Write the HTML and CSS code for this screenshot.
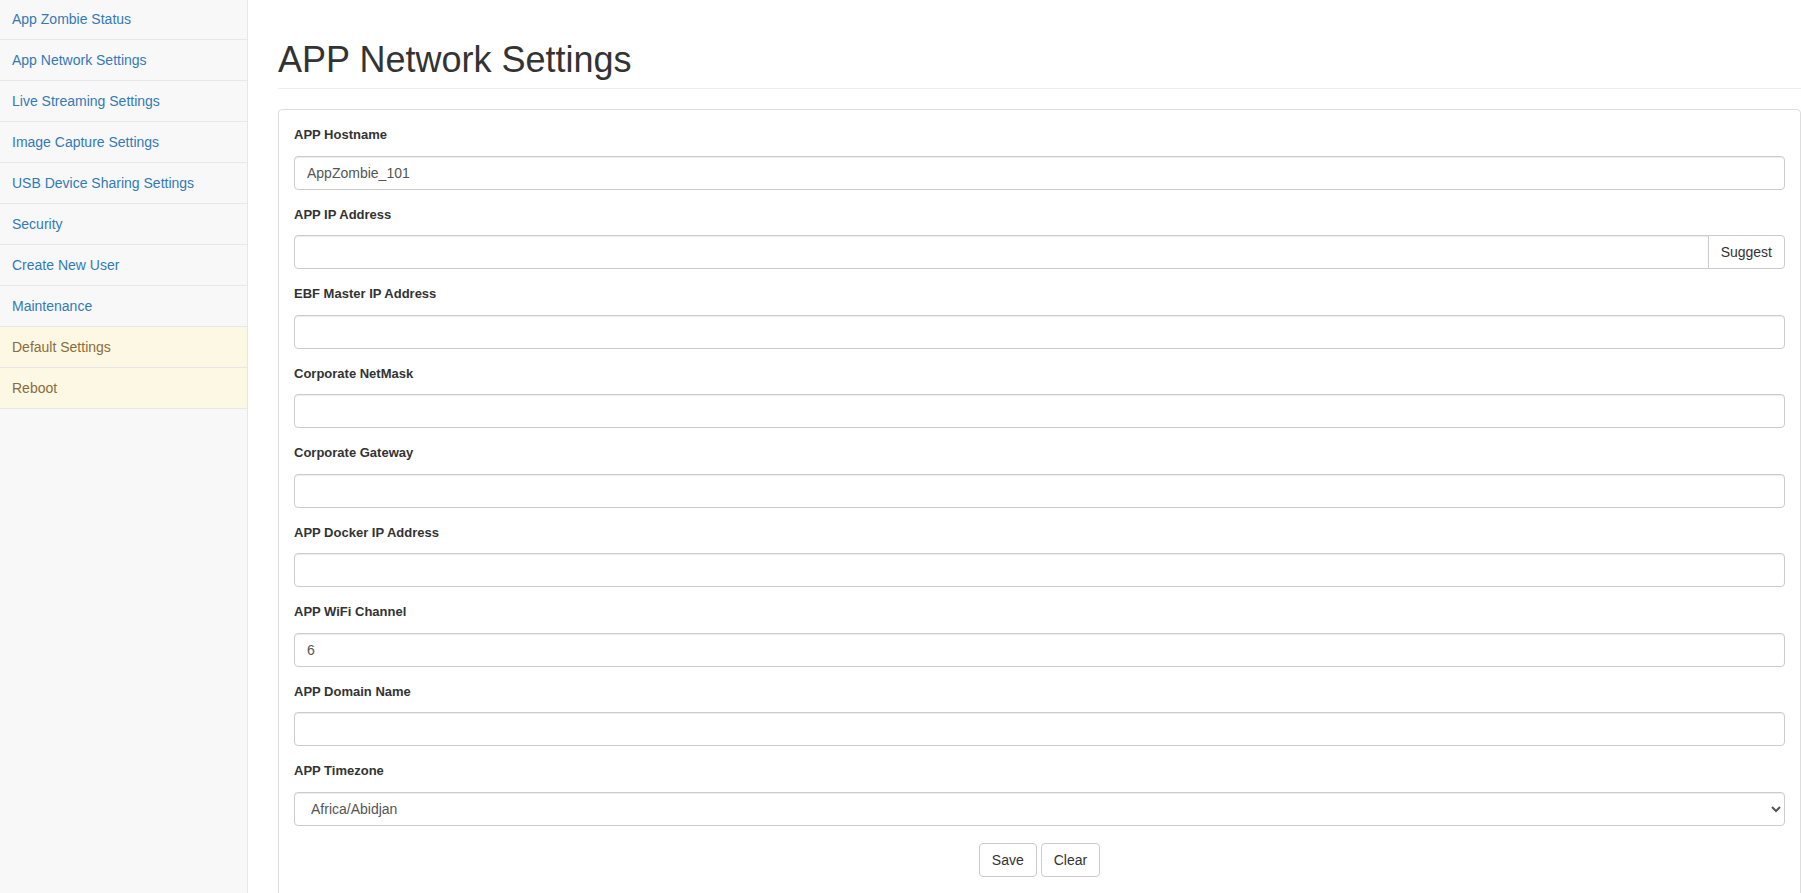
FILE: index.html
```html
<!DOCTYPE html>
<html lang="en">
<head>
<meta charset="utf-8">
<title>APP Network Settings</title>
<link rel="stylesheet" href="styles.css">
</head>
<body>
<div class="layout">
  <nav class="sidebar">
    <div class="list">
      <a class="item" href="#">App Zombie Status</a>
      <a class="item" href="#">App Network Settings</a>
      <a class="item" href="#">Live Streaming Settings</a>
      <a class="item" href="#">Image Capture Settings</a>
      <a class="item" href="#">USB Device Sharing Settings</a>
      <a class="item" href="#">Security</a>
      <a class="item" href="#">Create New User</a>
      <a class="item" href="#">Maintenance</a>
      <a class="item item-warning" href="#">Default Settings</a>
      <a class="item item-warning" href="#">Reboot</a>
    </div>
  </nav>
  <main class="main">
    <h1 class="page-title">APP Network Settings</h1>
    <div class="panel">
      <form class="panel-body">
        <div class="form-group">
          <label class="label">APP Hostname</label>
          <input class="control" type="text" value="AppZombie_101">
        </div>
        <div class="form-group">
          <label class="label">APP IP Address</label>
          <div class="input-group">
            <input class="control control-grouped" type="text">
            <button class="btn btn-addon" type="button">Suggest</button>
          </div>
        </div>
        <div class="form-group">
          <label class="label">EBF Master IP Address</label>
          <input class="control" type="text">
        </div>
        <div class="form-group">
          <label class="label">Corporate NetMask</label>
          <input class="control" type="text">
        </div>
        <div class="form-group">
          <label class="label">Corporate Gateway</label>
          <input class="control" type="text">
        </div>
        <div class="form-group">
          <label class="label">APP Docker IP Address</label>
          <input class="control" type="text">
        </div>
        <div class="form-group">
          <label class="label">APP WiFi Channel</label>
          <input class="control" type="text" value="6">
        </div>
        <div class="form-group">
          <label class="label">APP Domain Name</label>
          <input class="control" type="text">
        </div>
        <div class="form-group">
          <label class="label">APP Timezone</label>
          <select class="control select">
            <option>Africa/Abidjan</option>
            <option>Africa/Accra</option>
            <option>Africa/Addis_Ababa</option>
          </select>
        </div>
        <div class="actions">
          <button class="btn" type="button">Save</button>
          <button class="btn" type="button">Clear</button>
        </div>
      </form>
    </div>
  </main>
</div>
</body>
</html>
```

FILE: styles.css
```css
html, body {
  height: 100%;
}
body {
  margin: 0;
  overflow: hidden;
  font-family: "Liberation Sans", Arial, Helvetica, sans-serif;
  font-size: 14px;
  line-height: 20px;
  color: #333;
  background: #fff;
}
* {
  box-sizing: border-box;
}
.layout {
  display: flex;
  height: 100%;
}
.sidebar {
  width: 248px;
  flex: none;
  background: #f8f8f8;
  border-right: 1px solid #e7e7e7;
  height: 100%;
}
.list {
  display: flex;
  flex-direction: column;
  margin-top: -2px;
}
.item {
  display: block;
  padding: 10px 12px;
  border-top: 1px solid #e7e7e7;
  border-bottom: 1px solid #e7e7e7;
  margin-bottom: -1px;
  color: #337ab7;
  text-decoration: none;
  line-height: 20px;
}
.item-warning {
  background: #fcf8e3;
  color: #8a6d3b;
}
.main {
  flex: 1;
  min-width: 0;
  padding-left: 30px;
  padding-top: 40px;
}
.page-title {
  margin: 0 0 20px;
  padding-bottom: 9px;
  border-bottom: 1px solid #eee;
  font-size: 36px;
  font-weight: 500;
  line-height: 39px;
  color: #333;
}
.panel {
  border: 1px solid #ddd;
  border-radius: 4px;
  background: #fff;
  box-shadow: 0 1px 1px rgba(0, 0, 0, 0.05);
}
.panel-body {
  margin: 0;
  padding: 15px 15px 25px;
}
.form-group {
  margin-bottom: 15px;
}
.label {
  display: block;
  font-size: 13px;
  font-weight: 700;
  line-height: 20.5px;
  margin-bottom: 10px;
  color: #333;
}
.control {
  display: block;
  width: 100%;
  height: 34px;
  padding: 6px 12px;
  font-family: inherit;
  font-size: 14px;
  line-height: 20px;
  color: #555;
  background: #fff;
  border: 1px solid #ccc;
  border-radius: 4px;
  box-shadow: inset 0 1px 1px rgba(0, 0, 0, 0.075);
}
.select {
  padding: 6px 12px;
}
.input-group {
  display: flex;
}
.control-grouped {
  flex: 1;
  width: auto;
  min-width: 0;
  border-radius: 4px 0 0 4px;
}
.btn {
  display: inline-block;
  height: 34px;
  padding: 6px 12px;
  font-family: inherit;
  font-size: 14px;
  line-height: 20px;
  color: #333;
  background: #fff;
  border: 1px solid #ccc;
  border-radius: 4px;
  white-space: nowrap;
}
.btn-addon {
  margin-left: -1px;
  border-radius: 0 4px 4px 0;
}
.actions {
  display: flex;
  justify-content: center;
  gap: 4px;
  padding-top: 2px;
}
```
